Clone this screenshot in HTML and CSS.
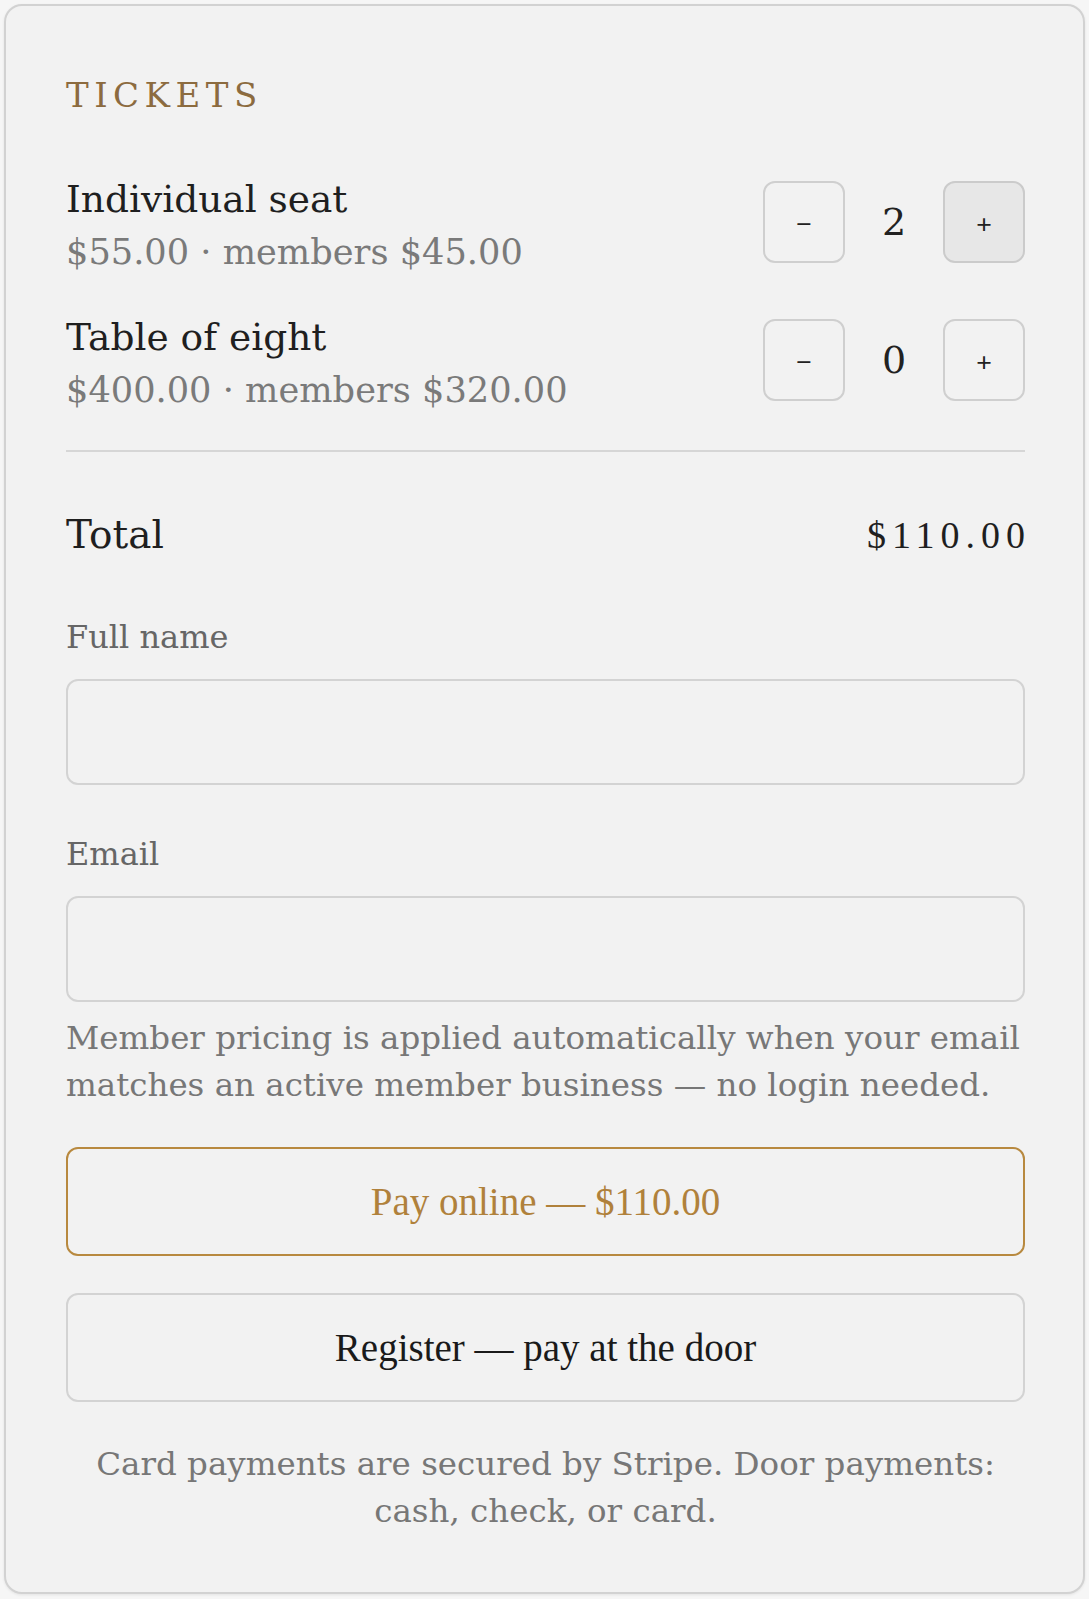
FILE: index.html
```html
<!DOCTYPE html>
<html lang="en">
<head>
<meta charset="utf-8">
<title>Tickets</title>
<link rel="stylesheet" href="styles.css">
</head>
<body>
<section class="card">
  <h2 class="eyebrow">TICKETS</h2>

  <div class="ticket-list">
    <div class="ticket">
      <div class="ticket-info">
        <div class="ticket-name">Individual seat</div>
        <div class="ticket-price">$55.00 · members $45.00</div>
      </div>
      <div class="stepper">
        <button class="step" type="button">−</button>
        <span class="qty">2</span>
        <button class="step step-active" type="button">+</button>
      </div>
    </div>
    <div class="ticket">
      <div class="ticket-info">
        <div class="ticket-name">Table of eight</div>
        <div class="ticket-price">$400.00 · members $320.00</div>
      </div>
      <div class="stepper">
        <button class="step" type="button">−</button>
        <span class="qty">0</span>
        <button class="step" type="button">+</button>
      </div>
    </div>
  </div>

  <hr class="divider">

  <div class="total-row">
    <span class="total-label">Total</span>
    <span class="total-amount">$110.00</span>
  </div>

  <div class="fields">
    <label class="field">
      <span class="field-label">Full name</span>
      <input class="field-input" type="text">
    </label>
    <label class="field">
      <span class="field-label">Email</span>
      <input class="field-input" type="email">
    </label>
  </div>

  <p class="hint">Member pricing is applied automatically when your email matches an active member business — no login needed.</p>

  <div class="actions">
    <button class="btn btn-primary" type="button">Pay online — $110.00</button>
    <button class="btn btn-secondary" type="button">Register — pay at the door</button>
  </div>

  <p class="footnote">Card payments are secured by Stripe. Door payments: cash, check, or card.</p>
</section>
</body>
</html>
```
FILE: styles.css
```css
* {
  box-sizing: border-box;
}

html, body {
  margin: 0;
}

body {
  padding: 4px;
  background: #f6f6f6;
  font-family: "DejaVu Serif", "Liberation Serif", serif;
  color: #1f1f1f;
}

.card {
  background: #f2f2f2;
  border: 2px solid #d2d2d2;
  border-radius: 18px;
  box-shadow: 0 1px 3px rgba(0, 0, 0, 0.08);
  padding: 68px 58px 57px 60px;
}

.eyebrow {
  margin: 0;
  font-size: 34px;
  line-height: 42px;
  font-weight: normal;
  letter-spacing: 5.5px;
  color: #8c6b3f;
}

.ticket-list {
  margin-top: 53px;
  display: flex;
  flex-direction: column;
  gap: 32px;
}

.ticket {
  display: flex;
  align-items: center;
  justify-content: space-between;
}

.ticket-name {
  font-size: 37.5px;
  line-height: 60px;
  color: #1f1f1f;
}

.ticket-price {
  font-size: 35.2px;
  line-height: 46px;
  color: #7a7a7a;
}

.stepper {
  display: flex;
  align-items: center;
  gap: 16px;
}

.step {
  width: 82px;
  height: 82px;
  padding: 4px 0 0;
  border: 2px solid #cfcfcf;
  border-radius: 12px;
  background: transparent;
  font-family: "Liberation Sans", Arial, sans-serif;
  font-size: 26.67px;
  line-height: 1;
  color: #222;
  display: flex;
  align-items: center;
  justify-content: center;
}

.step-active {
  background: #e7e7e7;
  border-color: #cbcbcb;
}

.qty {
  width: 66px;
  text-align: center;
  font-size: 38px;
  line-height: 50px;
  color: #222;
}

.divider {
  margin: 37px 0 0;
  border: 0;
  border-top: 2px solid #d6d6d6;
  height: 0;
}

.total-row {
  margin-top: 58px;
  display: flex;
  justify-content: space-between;
  align-items: baseline;
  line-height: 50px;
}

.total-label {
  font-size: 39px;
  color: #1f1f1f;
}

.total-amount {
  font-family: "Liberation Serif", serif;
  font-size: 38px;
  letter-spacing: 6px;
  margin-right: -6px;
  color: #1f1f1f;
}

.fields {
  margin-top: 57px;
  display: flex;
  flex-direction: column;
  gap: 49px;
}

.field {
  display: flex;
  flex-direction: column;
}

.field-label {
  font-size: 32px;
  line-height: 40px;
  color: #666;
  margin-bottom: 22px;
}

.field-input {
  display: block;
  width: 100%;
  height: 106px;
  border: 2px solid #d3d3d3;
  border-radius: 12px;
  background: #f2f2f2;
  padding: 0 24px;
  font-family: inherit;
  font-size: 32px;
  color: #1f1f1f;
}

.hint {
  margin: 13px 0 0;
  font-size: 32.5px;
  line-height: 47px;
  color: #777;
}

.actions {
  margin-top: 38px;
  display: flex;
  flex-direction: column;
  gap: 37px;
}

.btn {
  width: 100%;
  height: 109px;
  border-radius: 12px;
  background: transparent;
  font-family: "Liberation Serif", serif;
  font-size: 39px;
  line-height: 1;
  padding: 0;
}

.btn-primary {
  border: 2px solid #b8893f;
  color: #b0813b;
}

.btn-secondary {
  border: 2px solid #d3d3d3;
  color: #1a1a1a;
}

.footnote {
  margin: 39px 0 0;
  font-size: 32.5px;
  line-height: 47px;
  text-align: center;
  color: #777;
}
```
